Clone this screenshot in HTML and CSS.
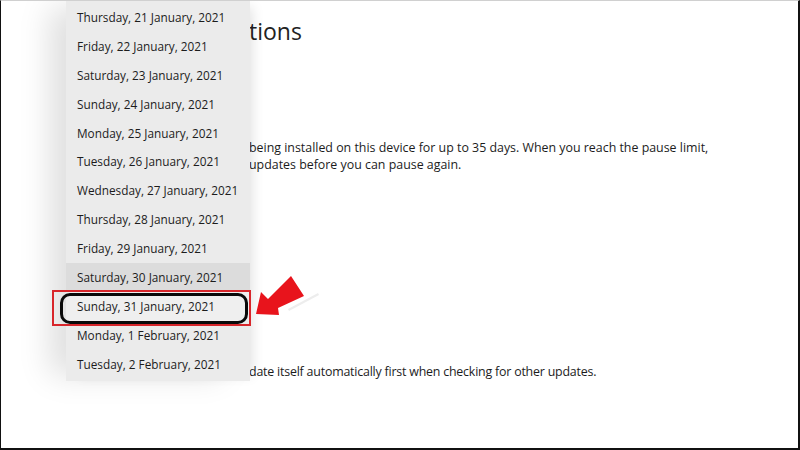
FILE: index.html
```html
<!DOCTYPE html>
<html lang="en">
<head>
<meta charset="utf-8">
<title>Advanced options</title>
<link rel="stylesheet" href="styles.css">
</head>
<body>
<div class="frame">
  <main class="content">
    <h1 class="title">tions</h1>
    <p class="para para-pause">being installed on this device for up to 35 days. When you reach the pause limit,<br>updates before you can pause again.</p>
    <p class="para para-auto">date itself automatically first when checking for other updates.</p>
  </main>

  <ul class="menu">
    <li class="item">Thursday, 21 January, 2021</li>
    <li class="item">Friday, 22 January, 2021</li>
    <li class="item">Saturday, 23 January, 2021</li>
    <li class="item">Sunday, 24 January, 2021</li>
    <li class="item">Monday, 25 January, 2021</li>
    <li class="item">Tuesday, 26 January, 2021</li>
    <li class="item">Wednesday, 27 January, 2021</li>
    <li class="item">Thursday, 28 January, 2021</li>
    <li class="item">Friday, 29 January, 2021</li>
    <li class="item item-hover">Saturday, 30 January, 2021</li>
    <li class="item item-picked">Sunday, 31 January, 2021</li>
    <li class="item">Monday, 1 February, 2021</li>
    <li class="item">Tuesday, 2 February, 2021</li>
  </ul>

  <div class="mark-red"></div>
  <div class="mark-black"></div>

  <svg class="arrow" width="90" height="60" viewBox="0 0 90 60" aria-hidden="true">
    <polygon points="37,38 67,22 68,24 38,40" fill="#ededed"/>
    <polygon points="5,43 10,21 17,28 40,5 53,25 27,37 28,44" fill="#e8141c"/>
  </svg>
</div>
</body>
</html>
```

FILE: styles.css
```css
* { box-sizing: border-box; }

html, body {
  margin: 0;
  padding: 0;
  background: #ffffff;
}

.frame {
  position: relative;
  width: 800px;
  height: 450px;
  overflow: hidden;
  background: #ffffff;
  border-top: 1px solid #d0d0d0;
  border-left: 1px solid #111;
  border-right: 2px solid #111;
  border-bottom: 2px solid #111;
  font-family: "Open Sans", "Noto Sans", sans-serif;
  color: #1c1c1c;
}

.content {
  display: flex;
  flex-direction: column;
  padding-left: 248px;
  padding-top: 14px;
}

.title {
  margin: 0;
  font-size: 23px;
  font-weight: 400;
  line-height: 32px;
  color: #222;
}

.para {
  margin: 0;
  font-size: 12.4px;
  line-height: 17px;
  color: #1c1c1c;
}

.para-pause {
  margin-top: 92px;
}

.para-auto {
  margin-top: 190px;
  letter-spacing: -0.2px;
}

.menu {
  position: absolute;
  left: 65px;
  top: 0;
  width: 184px;
  height: 380px;
  margin: 0;
  padding: 2px 0 0 0;
  list-style: none;
  background: #ebebeb;
  box-shadow: -22px 0 30px -6px rgba(0, 0, 0, 0.13), 8px 0 12px -6px rgba(0, 0, 0, 0.12);
}

.item {
  height: 28.9px;
  line-height: 28.9px;
  padding-left: 11px;
  font-size: 11.8px;
  color: #1c1c1c;
  white-space: nowrap;
}

.item-hover {
  background: #dcdcdc;
}

.item-picked {
  background: #efefef;
}

.mark-red {
  position: absolute;
  left: 51px;
  top: 289px;
  width: 199px;
  height: 36px;
  border: 2px solid #d8262b;
}

.mark-black {
  position: absolute;
  left: 59px;
  top: 292px;
  width: 188px;
  height: 31px;
  border: 3px solid #0a0a0a;
  border-radius: 10px;
}

.arrow {
  position: absolute;
  left: 250px;
  top: 270px;
}
```
